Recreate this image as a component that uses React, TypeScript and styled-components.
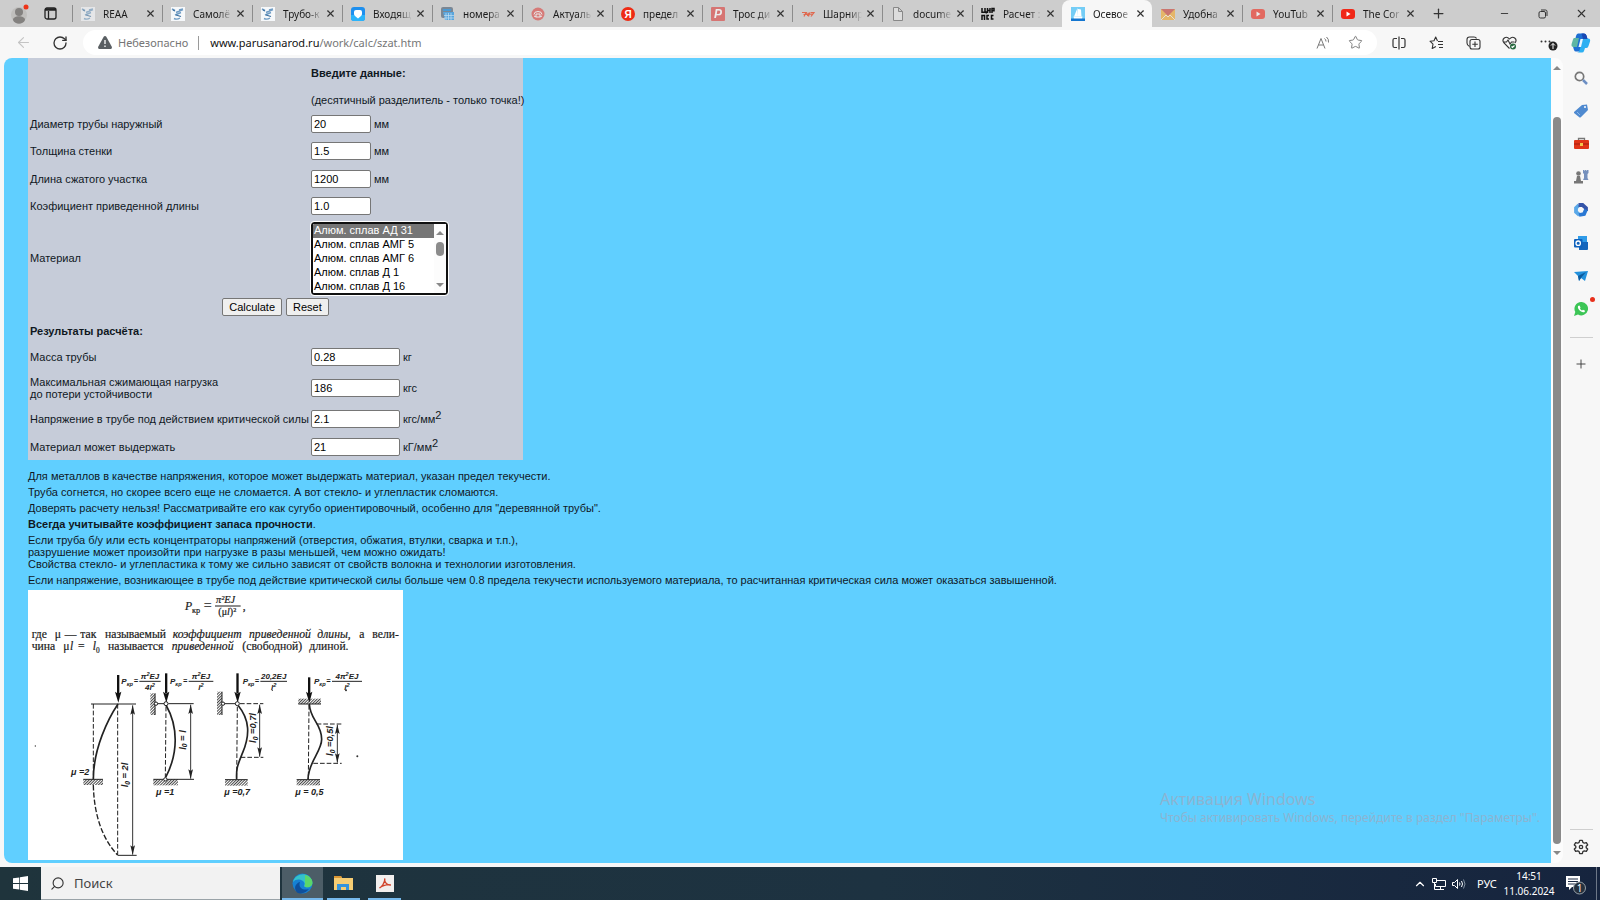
import React from 'react';
import styled, { createGlobalStyle, css } from 'styled-components';
import { RotateCw, ArrowLeft, Star, X, Plus, Minus, Search, ChevronUp } from 'lucide-react';

const GlobalStyle = createGlobalStyle`
  * { box-sizing: border-box; }
  body { margin: 0; background: #f7f7f7; }
  button, input, select { font: inherit; color: inherit; }
  p { margin: 0; }
`;

const uiFont = css`font-family: "Noto Sans", "Open Sans", sans-serif;`;

const Desktop = styled.div`
  display: flex;
  flex-direction: column;
  min-height: 100vh;
  ${uiFont}
  font-size: 11px;
  color: #1b1b1b;
`;

/* ---------- tab strip ---------- */
const TabStrip = styled.header`
  display: flex;
  height: 27px;
  background: #cdcdcd;
`;
const StripStart = styled.div`
  display: flex;
  align-items: center;
  gap: 13px;
  width: 72px;
  padding-left: 11px;
  flex: none;
`;
const TabList = styled.nav`
  display: flex;
  min-width: 0;
`;
const TabItem = styled.div<{ $active?: boolean; $bar?: boolean }>`
  display: flex;
  align-items: center;
  width: 90px;
  min-width: 0;
  padding-left: 9px;
  position: relative;
  border-radius: 8px 8px 0 0;
  background: ${p => (p.$active ? '#f7f7f7' : 'transparent')};
  &::before {
    content: '';
    position: absolute;
    left: 0;
    top: 5px;
    width: 1px;
    height: 17px;
    background: ${p => (p.$bar ? '#8c8c8c' : 'transparent')};
  }
`;
const Favicon = styled.span<{ $dim?: boolean }>`
  display: flex;
  flex: none;
  width: 14px;
  height: 14px;
  margin-right: 8px;
  opacity: ${p => (p.$dim ? 0.6 : 1)};
`;
const TabTitle = styled.a`
  flex: none;
  width: 39px;
  overflow: hidden;
  white-space: nowrap;
  color: #1b1b1b;
  text-decoration: none;
  font-size: 10px;
  line-height: 14px;
  mask-image: linear-gradient(90deg, #000 65%, transparent 100%);
`;
const IconButton = styled.button<{ $w?: number; $dim?: boolean }>`
  display: flex;
  align-items: center;
  justify-content: center;
  flex: none;
  width: ${p => p.$w ?? 16}px;
  height: 100%;
  padding: 0;
  border: 0;
  background: none;
  color: ${p => (p.$dim ? '#c4c4c4' : '#333')};
`;
const WindowControls = styled.div`
  display: flex;
  margin-left: auto;
`;

/* ---------- toolbar ---------- */
const Toolbar = styled.div`
  display: flex;
  align-items: center;
  height: 31px;
  background: #f7f7f7;
  padding: 0 8px 0 4px;
`;
const AddressBar = styled.div`
  display: flex;
  align-items: center;
  flex: 1;
  height: 25px;
  margin: 0 3px 0 5px;
  padding: 0 5px 0 15px;
  border-radius: 13px;
  background: #fff;
  font-size: 11px;
`;
const Security = styled.button`
  display: flex;
  align-items: center;
  gap: 6px;
  padding: 0 10px 0 0;
  border: 0;
  border-right: 1px solid #9a9a9a;
  background: none;
  color: #767676;
  line-height: 14px;
`;
const Url = styled.a`
  flex: 1;
  margin-left: 11px;
  color: #767676;
  text-decoration: none;
  b { font-weight: 400; color: #111; }
`;

/* ---------- middle ---------- */
const Middle = styled.div`
  display: flex;
  flex: 1;
  padding: 0 0 4px 4px;
  background: #f7f7f7;
`;
const Page = styled.main`
  position: relative;
  flex: 1;
  padding: 0 0 3px 24px;
  border-radius: 8px 0 0 8px;
  background: #60cfff;
  overflow: hidden;
  font-family: "Liberation Sans", Arial, sans-serif;
  font-size: 11px;
  line-height: 12px;
  color: #10181f;
`;
const Calc = styled.table`
  border-collapse: collapse;
  table-layout: fixed;
  background: #c6ccd9;
  width: 495px;
`;
const Row = styled.tr<{ $h: number }>`
  height: ${p => p.$h}px;
`;
const LabelCell = styled.td`
  width: 281px;
  padding: 0 0 0 2px;
  white-space: nowrap;
`;
const ValueCell = styled.td`
  padding: 0 0 0 2px;
  white-space: nowrap;
`;
const Intro = styled.td`
  padding: 0 0 4px 2px;
  vertical-align: bottom;
  white-space: nowrap;
  p + p { margin-top: 15px; }
`;
const ActionsCell = styled.td`
  padding: 0;
  text-align: center;
  font-size: 0;
`;
const Field = styled.div`
  display: flex;
  align-items: center;
  gap: 3px;
`;
const NumberInput = styled.input<{ $wide?: boolean }>`
  width: ${p => (p.$wide ? 89 : 60)}px;
  height: 18px;
  padding: 0 2px;
  border: 1px solid #767676;
  border-radius: 2px;
  background: #fff;
  color: #000;
`;
const Unit = styled.span`
  sup { font-size: 11px; line-height: 0; vertical-align: 4px; }
`;
const SelectBox = styled.div`
  position: relative;
  width: 137px;
`;
const MaterialSelect = styled.select`
  display: block;
  width: 100%;
  height: 73px;
  padding: 0;
  border: 2px solid #101010;
  border-radius: 3px;
  outline: 1px solid #fff;
  background: #fff;
  color: #000;
  option { height: 14px; min-height: 14px; padding: 0 1px; line-height: 14px; }
  option:checked {
    background: linear-gradient(#767676, #767676);
    -webkit-text-fill-color: #fff;
  }
`;
const SelectScroll = styled.div`
  position: absolute;
  inset: 2px 2px 2px auto;
  display: flex;
  flex-direction: column;
  align-items: center;
  width: 12px;
  padding: 7px 0 6px;
  background: #fcfcfc;
  pointer-events: none;
  i { width: 8px; height: 14px; margin: 7px 0 auto; border-radius: 4px; background: #8b8b8b; }
`;
const FormButton = styled.button`
  height: 18px;
  padding: 0 6px;
  margin: 0 2px;
  border: 1px solid #767676;
  border-radius: 2px;
  background: #efefef;
  color: #000;
  font-size: 11px;
  line-height: 14px;
`;
const Notes = styled.section`
  display: flex;
  flex-direction: column;
  gap: 4px;
  padding: 10px 0 4px;
`;
const Figure = styled.svg`
  display: block;
  background: #fff;
`;
const Watermark = styled.div`
  position: absolute;
  right: 11px;
  bottom: 37px;
  ${uiFont}
  color: #8bb4d2;
  font-size: 12px;
  line-height: 17px;
  p:first-child { font-size: 16px; line-height: 20px; }
`;

const ScrollTrack = styled.div`
  display: flex;
  flex-direction: column;
  align-items: center;
  flex: none;
  width: 12px;
  padding: 8px 0 8px;
  background: #fcfcfc;
  border-radius: 0 8px 8px 0;
`;
const ScrollThumb = styled.div`
  flex: 1;
  width: 8px;
  margin: 47px 0 7px;
  border-radius: 4px;
  background: #8a8a8a;
`;

const Sidebar = styled.aside`
  display: flex;
  flex-direction: column;
  align-items: center;
  flex: none;
  width: 37px;
  padding: 3px 1px 0 0;
`;
const SideButton = styled.button`
  position: relative;
  display: flex;
  align-items: center;
  justify-content: center;
  width: 30px;
  height: 33px;
  padding: 0;
  border: 0;
  background: none;
  color: #333;
`;
const SideRule = styled.hr<{ $bottom?: boolean }>`
  width: 23px;
  height: 1px;
  margin: ${p => (p.$bottom ? 'auto 0 0' : '12px 0 9px')};
  border: 0;
  background: #cfcfcf;
`;
const AlertDot = styled.i`
  position: absolute;
  right: 1px;
  top: 5px;
  width: 5px;
  height: 5px;
  border-radius: 50%;
  background: #e8301c;
`;

/* ---------- taskbar ---------- */
const Taskbar = styled.footer`
  display: flex;
  height: 33px;
  background: linear-gradient(90deg, #1f343c 0%, #1d3241 55%, #16243e 100%);
  color: #fff;
`;
const TaskButton = styled.button<{ $on?: boolean; $line?: boolean }>`
  position: relative;
  display: flex;
  align-items: center;
  justify-content: center;
  width: 41px;
  padding: 0 0 1px;
  border: 0;
  background: ${p => (p.$on ? '#4c5d67' : 'none')};
  &::after {
    content: '';
    position: absolute;
    left: ${p => (p.$on ? 0 : 4)}px;
    right: ${p => (p.$on ? 0 : 4)}px;
    bottom: 0;
    height: 2px;
    background: ${p => (p.$line ? '#76b9ed' : 'transparent')};
  }
`;
const TaskSearch = styled.label`
  display: flex;
  align-items: center;
  gap: 9px;
  width: 239px;
  margin-right: 2px;
  padding-left: 9px;
  border-bottom: 1px solid #9aa3a8;
  background: #f2f2f2;
  color: #333;
  svg { transform: scaleX(-1); }
  input {
    width: 180px;
    padding: 0;
    border: 0;
    background: none;
    font-size: 13px;
  }
  input::placeholder { color: #444; opacity: 1; }
`;
const Tray = styled.div`
  display: flex;
  align-items: center;
  margin-left: auto;
  padding-right: 3px;
`;
const Language = styled.button`
  width: 30px;
  padding: 0;
  border: 0;
  background: none;
`;
const Clock = styled.time`
  width: 54px;
  text-align: center;
  font-size: 10px;
  line-height: 15px;
`;
const ShowDesktop = styled.div`
  align-self: stretch;
  width: 1px;
  background: #6d7787;
`;

/* ---------- favicons ---------- */
const Bird = () => (
  <svg width="14" height="14" viewBox="0 0 14 14">
    <rect width="14" height="14" fill="#f6f8fa" />
    <path d="M1 2l3 1.500M5 5.500L12 2.500M12 2l-4 1M4 8l6-2.500M3 11.500q3 1.500 6-.5" stroke="#6f9cc4" strokeWidth="1.400" fill="none" />
    <path d="M5 8l5 1.500M2 3l2 1" stroke="#3a6f9f" strokeWidth="1.200" />
  </svg>
);
const Mail = () => (
  <svg width="14" height="14" viewBox="0 0 14 14">
    <rect width="14" height="14" rx="3" fill="#1e8fee" />
    <path d="M0 8h14v3q0 3-3 3H3q-3 0-3-3z" fill="#2bb4fa" />
    <path d="M3 5q0-2 2-2h4q2 0 2 2v2q0 1-1 2l-3 2.500L4 9Q3 8 3 7z" fill="#fff" />
  </svg>
);
const Calculator = () => (
  <svg width="14" height="14" viewBox="0 0 14 14">
    <rect width="12" height="11" rx="2" fill="#7b8794" />
    <path d="M2 3h8" stroke="#4a9ad4" strokeWidth="2" />
    <path d="M2 5h11v8H4z" fill="#5aa5dc" />
    <path d="M5 6v7M7.500 6v7M10 6v7M3 8.500h10M3 11h10" stroke="#c4dff2" strokeWidth=".7" />
  </svg>
);
const Round = () => (
  <svg width="14" height="14" viewBox="0 0 14 14">
    <circle cx="7" cy="7" r="6.500" fill="#dc4440" />
    <path d="M3 7.500a4 3 0 0 1 8 0M5 7h4v3H5zM3 9l2 1M11 9l-2 1" stroke="#fff" fill="none" />
  </svg>
);
const Letter = ({ ch, fill, round, italic }: { ch: string; fill: string; round?: boolean; italic?: boolean }) => (
  <svg width="14" height="14" viewBox="0 0 14 14">
    <rect width="14" height="14" rx={round ? 7 : 1} fill={fill} />
    <text x="7" y="11" textAnchor="middle" fontSize={round ? 10 : 12} fontWeight="700" fontStyle={italic ? 'italic' : 'normal'} fontFamily="Liberation Sans" fill="#fff">{ch}</text>
  </svg>
);
const Wings = () => (
  <svg width="14" height="14" viewBox="0 0 14 14">
    <path d="M1 5.500h4l-2 4M5.500 5.500l1 2.500 2-2.500-1 4M9.500 5.500H13l-3 4M2.500 7.500l9-.5" stroke="#e0694f" strokeWidth="1.200" fill="none" />
  </svg>
);
const Doc = () => (
  <svg width="14" height="14" viewBox="0 0 14 14">
    <path d="M2.500.500h5l4 4v9h-9zM7.500.500v4h4" stroke="#888" fill="#dcdcdc" />
  </svg>
);
const Cnt = () => (
  <svg width="14" height="14" viewBox="0 0 14 14" fill="none" stroke="#111" strokeWidth="1.500">
    <path d="M1 1v4.300h3V1M4 5h1.300v1.500M6.500 1v5M9 1v5M6.500 3.500H9M11 6V1.500h2v2.300h-2" />
    <path d="M1 13V8.500h2.500V13M8 8.500H6V12h2M12.500 8.500h-2V12h2" />
  </svg>
);
const Sail = () => (
  <svg width="14" height="14" viewBox="0 0 14 14">
    <rect width="14" height="14" fill="#74cdf6" />
    <path d="M6.500 1L3 9.500h4zM7 2l3 .5.500 7H7z" fill="#fff" />
    <path d="M2.500 9.500h9L11 12H3z" fill="#fff" />
    <path d="M0 11.500h14V14H0z" fill="#1476d0" />
  </svg>
);
const Envelope = () => (
  <svg width="14" height="14" viewBox="0 0 14 14">
    <rect y="2" width="14" height="11" fill="#f5a828" />
    <path d="M0 2h14L7 9z" fill="#c93c34" />
    <path d="M0 13l5-5 2 2 2-2 5 5" stroke="#fff" fill="none" strokeWidth=".8" />
  </svg>
);
const Tube = () => (
  <svg width="14" height="14" viewBox="0 0 14 14">
    <rect y="2" width="14" height="10" rx="3" fill="#f02818" />
    <path d="M5.500 4.500v5l4-2.500z" fill="#fff" />
  </svg>
);

const tabs: { title: string; icon: React.ReactNode; dim?: boolean; active?: boolean }[] = [
  { title: 'REAA', icon: <Bird />, dim: true },
  { title: 'Самолё', icon: <Bird /> },
  { title: 'Трубо-к', icon: <Bird /> },
  { title: 'Входящ', icon: <Mail /> },
  { title: 'номера', icon: <Calculator /> },
  { title: 'Актуаль', icon: <Round />, dim: true },
  { title: 'предел', icon: <Letter ch="Я" fill="#ee2b14" round /> },
  { title: 'Трос ди', icon: <Letter ch="P" fill="#dc3c38" italic />, dim: true },
  { title: 'Шарнир', icon: <Wings /> },
  { title: 'docume', icon: <Doc /> },
  { title: 'Расчет :', icon: <Cnt /> },
  { title: 'Осевое', icon: <Sail />, active: true },
  { title: 'Удобна', icon: <Envelope />, dim: true },
  { title: 'YouTub', icon: <Tube />, dim: true },
  { title: 'The Cor', icon: <Tube /> },
];

const Profile = () => (
  <svg width="20" height="22" viewBox="0 0 20 22">
    <circle cx="8" cy="12" r="8" fill="#c0bfbd" />
    <circle cx="8" cy="9" r="4" fill="#83817f" />
    <path d="M2 17c0-5 12-5 12 0-2 5-10 5-12 0z" fill="#83817f" />
    <circle cx="15" cy="4" r="2.500" fill="#ee3418" />
  </svg>
);
const Workspaces = () => (
  <svg width="13" height="13" viewBox="0 0 13 13" fill="none" stroke="#222" strokeWidth="1.300">
    <rect x="1" y="1" width="11" height="11" rx="2" /><path d="M1 2.500h11" strokeWidth="2.500" /><path d="M4.500 4v8" />
  </svg>
);
const Restore = () => (
  <svg width="10" height="10" viewBox="0 0 10 10" fill="none" stroke="#333">
    <rect x="1" y="2.500" width="6.500" height="6.500" rx="1.500" /><path d="M3 1h4.500Q9 1 9 2.500V7" />
  </svg>
);
const Warning = () => (
  <svg width="14" height="13" viewBox="0 0 14 13">
    <path d="M7 0c.6 0 1 .3 1.300.8l5.500 10c.4 1-.1 2.200-1.300 2.200h-11C.3 13-.2 11.800.2 10.800l5.500-10C6 .3 6.400 0 7 0z" fill="#5a5f63" />
    <path d="M7 4v4M7 9.500v1.500" stroke="#fff" strokeWidth="1.300" />
  </svg>
);
const ReadAloud = () => (
  <svg width="14" height="14" viewBox="0 0 14 14" fill="none" stroke="#777">
    <path d="M1 12.500L5 2.500l4 10M2.500 9h5M8.500 2.500q1.500 1 1.500 3M10.500 1q2.500 2 2 5.500" />
  </svg>
);
const Split = () => (
  <svg width="14" height="14" viewBox="0 0 14 14" fill="none" stroke="#333" strokeWidth="1.200">
    <path d="M5 2.500H2.500q-1.500 0-1.500 1.500v6q0 1.500 1.500 1.500H5M9 2.500h2.500q1.500 0 1.500 1.500v6q0 1.500-1.500 1.500H9M7 .5v13" />
  </svg>
);
const Favorites = () => (
  <svg width="15" height="14" viewBox="0 0 15 14" fill="none" stroke="#333" strokeWidth="1.100" strokeLinejoin="round">
    <path d="M8.500 5L6.700 1 5 4.700 1 5.200l3 3-.8 4.300 3.700-2.100M9 5.500h5M9 8.500h5M10 11.500h4" />
  </svg>
);
const Collections = () => (
  <svg width="15" height="14" viewBox="0 0 15 14" fill="none" stroke="#333" strokeWidth="1.100">
    <path d="M3.500 10.500Q1 9.500 1 7V3.500Q1 1 3.500 1H8q2 0 2.500 1.500" />
    <rect x="4" y="3.500" width="10" height="9.500" rx="2" /><path d="M9 5.500v5.500M6.300 8.300h5.500" />
  </svg>
);
const Heart = () => (
  <svg width="15" height="14" viewBox="0 0 15 14" fill="none" stroke="#333" strokeWidth="1.100">
    <path d="M7.500 12.500L2 7C-1 3 4-1 7.500 3 11-1 16 3 13 7M1.500 6h3l1.500-2 2 4 1.500-2h3" />
    <circle cx="11" cy="10.500" r="3" fill="#27693f" stroke="none" /><path d="M9.500 10.500l1 1 2-2" stroke="#fff" />
  </svg>
);
const More = () => (
  <svg width="20" height="16" viewBox="0 0 20 16">
    <g fill="#333"><circle cx="2.500" cy="6.500" r="1" /><circle cx="6.500" cy="6.500" r="1" /><circle cx="10.500" cy="6.500" r="1" /></g>
    <circle cx="14" cy="11" r="4.500" fill="#222" /><path d="M14 14V8.500M12 10.500l2-2 2 2" stroke="#fff" fill="none" />
  </svg>
);
const Copilot = () => (
  <svg width="20" height="20" viewBox="0 0 20 20">
    <path d="M7 .5h6q2 0 2.700 2.500L16.500 6 13 14l-3 4.500H5Q3.500 18.500 3 17l-.8-2.500L5 3Q5.600.5 7 .5z" fill="#1d6fd3" />
    <path d="M3 5h5L6 14H2.500Q0 14 .6 11L2 6.500Q2.400 5 3 5z" fill="#5db5a4" />
    <path d="M12 5.500h5q2.800 0 2 3L17.500 13Q17 15 15.500 15H14l-1 3q-.5 1.500-2 1.500H6q2 0 2.500-2z" fill="#2db0f2" />
    <path d="M13 .5q2 0 2.500 2l1 3.500H12L10.500.5z" fill="#1848b4" />
    <path d="M9.500 6H12L10 14H7.500z" fill="#eaf8ff" />
  </svg>
);

/* ---------- sidebar drawings ---------- */
const sideIcons: React.ReactNode[] = [
  <svg key="s" width="14" height="14" viewBox="0 0 14 14" fill="none"><circle cx="5.500" cy="5.500" r="4.200" stroke="#777" strokeWidth="1.700" /><path d="M9 9l4 4" stroke="#6c8fc4" strokeWidth="2.500" /></svg>,
  <svg key="t" width="14" height="14" viewBox="0 0 14 14"><path d="M0 8L8 1l5-.5L14 6l-7 7q-1 1-2 0L0 9z" fill="#4f8ad0" /><circle cx="11" cy="3" r="1" fill="#fff" /><path d="M3 8l3 3" stroke="#88b6ea" /></svg>,
  <svg key="b" width="15" height="13" viewBox="0 0 15 13"><path d="M4.500 4V1.500h6V4" stroke="#777" fill="none" strokeWidth="1.300" /><rect y="3" width="15" height="9" rx="1" fill="#e03418" /><path d="M0 7h15" stroke="#a01c10" /><path d="M6 6h3v3H6z" fill="#f4c64c" /></svg>,
  <svg key="c" width="15" height="15" viewBox="0 0 15 15"><path d="M9 1h1.500v1H11V1h1.500v1H13V1h1.500v3l-1 1v4l1 2H9l1-2V5L9 4z" fill="#7590bd" /><circle cx="4.500" cy="4.500" r="2.300" fill="#777" /><path d="M3 7h3l1 5h2v2.500H0V12h2z" fill="#777" /></svg>,
  <svg key="o" width="14" height="14" viewBox="0 0 14 14" fill="none" strokeWidth="3.800"><path d="M5.500 12L2 9V5l3-3" stroke="#5aa8e8" /><path d="M4.500 2h4l3.500 3v3" stroke="#3554a8" /><path d="M12 6.500L10 11l-5 1" stroke="#2a78d4" /></svg>,
  <svg key="m" width="14" height="14" viewBox="0 0 14 14"><rect x="4" width="9" height="10" fill="#2f9be8" /><path d="M5 6h9v7q0 1-1 1H5z" fill="#1566bc" /><rect y="3" width="8.500" height="8.500" rx="1" fill="#0f62bd" /><circle cx="4.200" cy="7.200" r="2.200" fill="none" stroke="#fff" strokeWidth="1.300" /></svg>,
  <svg key="g" width="14" height="12" viewBox="0 0 14 12"><path d="M0 2l14-1-3 10-4-3-2 3-1-5z" fill="#2391dc" /><path d="M4 6l8-4-5 6-2 3z" fill="#0d5b9e" /></svg>,
  <svg key="w" width="14" height="14" viewBox="0 0 14 14"><path d="M7 0a6.700 6.700 0 1 1-3 12.500L0 14l1.300-4A6.700 6.700 0 0 1 7 0z" fill="#3cc556" /><path d="M4 4l1.500-.5L6.500 5.500 6 6.500q.7 1.300 2 2l1-.8 2 1-.4 1.300q-1.500 1-4-.7Q3.300 6.800 4 4z" fill="#fff" /></svg>,
];

const Gear = () => (
  <svg width="16" height="16" viewBox="0 0 24 24" fill="none" stroke="#333" strokeWidth="2" strokeLinejoin="round">
    <path d="M10 2h4l.8 3 2.200 1.300 3-.9 2 3.500-2.200 2.100v2l2.200 2.100-2 3.500-3-.9-2.200 1.300-.8 3h-4l-.8-3L7 17.700l-3 .9-2-3.500L4.200 13v-2L2 8.900l2-3.500 3 .9L9.200 5z" /><circle cx="12" cy="12" r="2.500" />
  </svg>
);

/* ---------- buckling schemes ---------- */
const Hatch = ({ x, y, w, h }: { x: number; y: number; w: number; h: number }) => (
  <rect x={x} y={y} width={w} height={h} fill="url(#hatch)" />
);
const Load = ({ x, top = -45 }: { x: number; top?: number }) => (
  <g fill="#111"><path d={`M${x - 3} ${top}h7v60h-7z`} /><path d={`M${x - 9} 5l9 6 10-6-9 33z`} /></g>
);
const Dimension = ({ x, y1, y2 }: { x: number; y1: number; y2: number }) => (
  <g fill="#222"><path d={`M${x} ${y1}V${y2}`} stroke="#333" strokeWidth="3" />
    <path d={`M${x} ${y1}l7 28-7-5-7 5zM${x} ${y2}l7-28-7 5-7-5z`} /></g>
);
const Squared = ({ pre, post }: { pre: string; post?: string }) => (
  <>{pre}<tspan fontSize="17" dy="-9">2</tspan>{post && <tspan dy="9">{post}</tspan>}</>
);
const Formula = ({ x, x2, w, top, bottom }: { x: number; x2: number; w: number; top: React.ReactNode; bottom: string }) => (
  <g fontSize="24">
    <text x={x} y="-18">P<tspan fontSize="17" dy="7">кр</tspan></text>
    <text x={x2 - 17} y="-20" fontSize="22">=</text>
    <text x={x2 + w / 2} y="-33" textAnchor="middle">{top}</text>
    <path d={`M${x2} -26h${w}`} stroke="#222" strokeWidth="3" />
    <text x={x2 + w / 2} y="0" textAnchor="middle"><Squared pre={bottom} /></text>
  </g>
);
const Length = ({ x, y, children }: { x: number; y: number; children: string }) => (
  <text transform={`translate(${x} ${y}) rotate(-90)`} textAnchor="middle" fontSize="28">l<tspan fontSize="20" dy="5">0</tspan><tspan dy="-5">{children}</tspan></text>
);
const line1: [number, string, boolean?][] = [
  [35, 'где'], [104, 'μ'], [134, '—'], [181, 'так'], [255, 'называемый'], [458, 'коэффициент', true],
  [687, 'приведенной', true], [892, 'длины,', true], [1018, 'а'], [1057, 'вели-'],
];
const line2: [number, string, boolean?][] = [
  [35, 'чина'], [130, 'μ'], [150, 'l', true], [174, '='], [264, 'называется'], [455, 'приведенной', true], [667, '(свободной)'], [868, 'длиной.'],
];

const Scheme = () => (
  <Figure width="375" height="270" viewBox="24 -300 1125 810" role="img" aria-label="Схемы закрепления">
    <defs>
      <pattern id="hatch" width="6" height="6" patternUnits="userSpaceOnUse" patternTransform="rotate(45)">
        <path d="M1.500 0v6" stroke="#222" strokeWidth="2.500" />
      </pattern>
    </defs>
    <g fontFamily="Liberation Serif, serif" fontSize="35" fill="#1a1a1a" stroke="#1a1a1a" strokeWidth=".6">
      <text x="495" y="-240" fontStyle="italic">P</text>
      <text x="516" y="-232" fontSize="25">кр</text>
      <text x="551" y="-241" fontSize="42">=</text>
      <text x="588" y="-261" fontSize="31" fontStyle="italic">π²EJ</text>
      <path d="M585 -252h77" strokeWidth="3" />
      <text x="595" y="-224" fontSize="30">(μ<tspan fontStyle="italic">l</tspan>)²</text>
      <text x="668" y="-240">,</text>
      {line1.map(([x, t, i]) => <text key={x} x={x} y="-156" fontStyle={i ? 'italic' : 'normal'}>{t}</text>)}
      {line2.map(([x, t, i]) => <text key={x} x={x} y="-119" fontStyle={i ? 'italic' : 'normal'}>{t}</text>)}
      <text x="218" y="-119" fontStyle="italic">l<tspan fontSize="22" dy="7" fontStyle="normal">0</tspan></text>
    </g>
    <g fontFamily="Liberation Sans, sans-serif" fontStyle="italic" fontWeight="700" fontSize="27" fill="#222">
      <Formula x={304} x2={358} w={64} top={<Squared pre="π" post="EJ" />} bottom="4l" />
      <Formula x={450} x2={506} w={74} top={<Squared pre="π" post="EJ" />} bottom="l" />
      <Formula x={668} x2={721} w={80} top="20,2EJ" bottom="l" />
      <Formula x={882} x2={936} w={90} top={<Squared pre="4π" post="EJ" />} bottom="l" />
      <text x="153" y="254">μ =2</text>
      <text x="408" y="315">μ =1</text>
      <text x="613" y="315">μ =0,7</text>
      <text x="826" y="315">μ = 0,5</text>
      <Length x={325} y={255}> = 2l</Length>
      <Length x={497} y={150}> = l</Length>
      <Length x={708} y={114}> =0,7l</Length>
      <Length x={939} y={153}> =0,5l</Length>
    </g>
    <g fill="none" stroke="#222" strokeWidth="3">
      <path d="M213 42H348M293 496h57M190 268h59M445 41h76M400 268h122M407 41h31M405 10v65M608 41h44M606 5v70M615 269h68M835 42h68M830 269h70" />
      <path d="M220 42V265M293 42V495M438 50L436 262M652 50l-2 218M867 45l-2 223M660 41h70M662 202h68M890 102h75M880 220h85" strokeDasharray="14 6" />
      <path d="M220 285C222 380 250 450 293 495" strokeWidth="4" strokeDasharray="16 6" />
      <path d="M294 42C265 85 220 175 220 268M438 45C475 110 475 190 437 262M654 46C690 90 690 135 668 188 653 225 648 235 650 268M868 42C870 90 905 100 905 148 905 185 865 215 864 268" strokeWidth="5" />
    </g>
    <Load x={294} /><Load x={438} top={-50} /><Load x={652} top={-50} /><Load x={867} top={-38} />
    <Dimension x={338} y1={46} y2={494} /><Dimension x={512} y1={44} y2={266} />
    <Dimension x={719} y1={44} y2={200} /><Dimension x={952} y1={104} y2={218} />
    <Hatch x={190} y={268} w={59} h={17} /><Hatch x={400} y={268} w={74} h={18} /><Hatch x={615} y={269} w={68} h={18} />
    <Hatch x={830} y={269} w={70} h={17} /><Hatch x={835} y={26} w={68} h={16} />
    <Hatch x={391} y={10} w={15} h={65} /><Hatch x={591} y={5} w={15} h={70} />
    <g fill="#fff" stroke="#222" strokeWidth="3">
      <circle cx="438" cy="41" r="6" /><circle cx="408" cy="41" r="5" /><circle cx="436" cy="268" r="5" />
      <circle cx="652" cy="41" r="6" /><circle cx="609" cy="41" r="5" />
    </g>
    <g fill="#333">
      <circle cx="1012" cy="199" r="3" /><circle cx="978" cy="1" r="3" /><circle cx="757" cy="1" r="2" /><circle cx="46" cy="168" r="2" />
    </g>
  </Figure>
);

const inputs = [
  { id: 'diameter', h: 27, label: 'Диаметр трубы наружный', value: '20', unit: 'мм' },
  { id: 'wall', h: 28, label: 'Толщина стенки', value: '1.5', unit: 'мм' },
  { id: 'length', h: 27, label: 'Длина сжатого участка', value: '1200', unit: 'мм' },
  { id: 'factor', h: 28, label: 'Коэфициент приведенной длины', value: '1.0', unit: '' },
];
const results = [
  { id: 'mass', h: 27, label: 'Масса трубы', value: '0.28', unit: 'кг' },
  { id: 'load', h: 35, label: <>Максимальная сжимающая нагрузка<br />до потери устойчивости</>, value: '186', unit: 'кгс' },
  { id: 'stress', h: 28, label: 'Напряжение в трубе под действием критической силы', value: '2.1', unit: <>кгс/мм<sup>2</sup></> },
  { id: 'limit', h: 27, label: 'Материал может выдержать', value: '21', unit: <>кГ/мм<sup>2</sup></> },
];
const materials = [
  'Алюм. сплав АД 31', 'Алюм. сплав АМГ 5', 'Алюм. сплав АМГ 6', 'Алюм. сплав Д 1', 'Алюм. сплав Д 16',
];

export default function App() {
  return (
    <Desktop>
      <GlobalStyle />
      <TabStrip>
        <StripStart><Profile /><Workspaces /></StripStart>
        <TabList>
          {tabs.map((t, i) => (
            <TabItem key={t.title} $active={t.active} $bar={!t.active && !tabs[i - 1]?.active}>
              <Favicon $dim={t.dim}>{t.icon}</Favicon>
              <TabTitle href="#">{t.title}</TabTitle>
              <IconButton $w={17} aria-label="Закрыть вкладку"><X size={11} strokeWidth={2.500} /></IconButton>
            </TabItem>
          ))}
        </TabList>
        <IconButton $w={32} aria-label="Новая вкладка"><Plus size={15} strokeWidth={2} /></IconButton>
        <WindowControls>
          <IconButton $w={38} aria-label="Свернуть"><Minus size={11} /></IconButton>
          <IconButton $w={39} aria-label="Восстановить"><Restore /></IconButton>
          <IconButton $w={38} aria-label="Закрыть"><X size={13} /></IconButton>
        </WindowControls>
      </TabStrip>

      <Toolbar>
        <IconButton $w={38} $dim aria-label="Назад"><ArrowLeft size={17} strokeWidth={1.500} /></IconButton>
        <IconButton $w={36} aria-label="Обновить"><RotateCw size={16} strokeWidth={2} /></IconButton>
        <AddressBar>
          <Security><Warning />Небезопасно</Security>
          <Url href="#"><b>www.parusanarod.ru</b>/work/calc/szat.htm</Url>
          <IconButton $w={33} aria-label="Прочесть вслух"><ReadAloud /></IconButton>
          <IconButton $w={33} aria-label="В избранное"><Star size={15} strokeWidth={1.500} color="#777" /></IconButton>
        </AddressBar>
        <IconButton $w={38} aria-label="Разделить экран"><Split /></IconButton>
        <IconButton $w={37} aria-label="Избранное"><Favorites /></IconButton>
        <IconButton $w={36} aria-label="Коллекции"><Collections /></IconButton>
        <IconButton $w={37} aria-label="Производительность"><Heart /></IconButton>
        <IconButton $w={42} aria-label="Ещё"><More /></IconButton>
        <IconButton $w={22} aria-label="Copilot"><Copilot /></IconButton>
      </Toolbar>

      <Middle>
        <Page>
          <form onSubmit={e => e.preventDefault()}>
            <Calc>
              <tbody>
                <Row $h={52}>
                  <LabelCell />
                  <Intro><p><b>Введите данные:</b></p><p>(десятичный разделитель - только точка!)</p></Intro>
                </Row>
                {inputs.map(r => (
                  <Row key={r.id} $h={r.h}>
                    <LabelCell><label htmlFor={r.id}>{r.label}</label></LabelCell>
                    <ValueCell><Field><NumberInput id={r.id} defaultValue={r.value} /><Unit>{r.unit}</Unit></Field></ValueCell>
                  </Row>
                ))}
                <Row $h={76}>
                  <LabelCell><label htmlFor="material">Материал</label></LabelCell>
                  <ValueCell>
                    <SelectBox>
                      <MaterialSelect id="material" size={5} defaultValue={materials[0]}>
                        {materials.map(m => <option key={m}>{m}</option>)}
                      </MaterialSelect>
                      <SelectScroll>
                        <svg width="8" height="4" viewBox="0 0 8 4"><path d="M0 4l4-4 4 4z" fill="#888" /></svg>
                        <i />
                        <svg width="8" height="4" viewBox="0 0 8 4"><path d="M0 0l4 4 4-4z" fill="#888" /></svg>
                      </SelectScroll>
                    </SelectBox>
                  </ValueCell>
                </Row>
                <Row $h={23}>
                  <ActionsCell colSpan={2}><FormButton type="submit">Calculate</FormButton><FormButton type="reset">Reset</FormButton></ActionsCell>
                </Row>
                <Row $h={24}><LabelCell colSpan={2}><b>Результаты расчёта:</b></LabelCell></Row>
                {results.map(r => (
                  <Row key={r.id} $h={r.h}>
                    <LabelCell><label htmlFor={r.id}>{r.label}</label></LabelCell>
                    <ValueCell><Field><NumberInput $wide id={r.id} defaultValue={r.value} /><Unit>{r.unit}</Unit></Field></ValueCell>
                  </Row>
                ))}
              </tbody>
            </Calc>
          </form>
          <Notes>
            <p>Для металлов в качестве напряжения, которое может выдержать материал, указан предел текучести.</p>
            <p>Труба согнется, но скорее всего еще не сломается. А вот стекло- и углепластик сломаются.</p>
            <p>Доверять расчету нельзя! Рассматривайте его как сугубо ориентировочный, особенно для "деревянной трубы".</p>
            <p><b>Всегда учитывайте коэффициент запаса прочности</b>.</p>
            <p>Если труба б/у или есть концентраторы напряжений (отверстия, обжатия, втулки, сварка и т.п.),<br />
              разрушение может произойти при нагрузке в разы меньшей, чем можно ожидать!<br />
              Свойства стекло- и углепластика к тому же сильно зависят от свойств волокна и технологии изготовления.</p>
            <p>Если напряжение, возникающее в трубе под действие критической силы больше чем 0.8 предела текучести используемого материала, то расчитанная критическая сила может оказаться завышенной.</p>
          </Notes>
          <Scheme />
          <Watermark>
            <p>Активация Windows</p>
            <p>Чтобы активировать Windows, перейдите в раздел "Параметры".</p>
          </Watermark>
        </Page>
        <ScrollTrack>
          <svg width="8" height="4" viewBox="0 0 8 4"><path d="M0 4l4-4 4 4z" fill="#888" /></svg>
          <ScrollThumb />
          <svg width="8" height="4" viewBox="0 0 8 4"><path d="M0 0l4 4 4-4z" fill="#888" /></svg>
        </ScrollTrack>
        <Sidebar>
          {sideIcons.map((icon, i) => (
            <SideButton key={i} aria-label={`Панель ${i + 1}`}>{icon}{i === 7 && <AlertDot />}</SideButton>
          ))}
          <SideRule />
          <SideButton aria-label="Настроить"><Plus size={14} strokeWidth={1.500} /></SideButton>
          <SideRule $bottom />
          <SideButton aria-label="Параметры"><Gear /></SideButton>
        </Sidebar>
      </Middle>

      <Taskbar>
        <TaskButton aria-label="Пуск">
          <svg width="15" height="15" viewBox="0 0 15 15" fill="#fff"><path d="M0 2.300l6.300-.9v5.700H0zM7 1.300L15 0v7.100H7zM0 7.900h6.300v5.700L0 12.700zM7 7.900h8V15l-8-1.200z" /></svg>
        </TaskButton>
        <TaskSearch><Search size={15} strokeWidth={1.800} /><input placeholder="Поиск" aria-label="Поиск" /></TaskSearch>
        <TaskButton $on $line aria-label="Edge">
          <svg width="21" height="21" viewBox="0 0 21 21">
            <circle cx="10.500" cy="10.500" r="10" fill="#1681d4" />
            <path d="M1 9C3 0 17-2 20 8c1 5-3 7-7 6-2-1 0-2-.5-4C11 6 4 5 1 9z" fill="#35c1c9" />
            <path d="M13 2c5 1 8 5 7.500 8.500-.8 4-5 4.500-7.500 3.300-1-1 .5-2 0-4z" fill="#5bd66a" />
            <path d="M8 9c-2 5 2 9 9 7-3 4-8 5.500-12 3.500C1 15 4 10 8 9z" fill="#0e4f9c" />
          </svg>
        </TaskButton>
        <TaskButton $line aria-label="Проводник">
          <svg width="19" height="16" viewBox="0 0 19 16"><path d="M0 1h7l1 2h11v12H0z" fill="#f6cd73" /><path d="M0 1h7l1 2H0z" fill="#d99635" /><path d="M3 15V9h12v6h-3v-3H7v3z" fill="#3594dc" /></svg>
        </TaskButton>
        <TaskButton $line aria-label="Acrobat">
          <svg width="18" height="17" viewBox="0 0 18 17"><rect width="18" height="17" fill="#f2efee" /><path d="M3.500 13c2-1 5.500-5 5.300-9.500-1 4 3 7 6 6.500-4-1-9 .8-11.300 3z" fill="none" stroke="#d1432b" strokeWidth="1.300" /></svg>
        </TaskButton>
        <Tray>
          <IconButton $w={24} aria-label="Скрытые значки"><ChevronUp size={14} color="#fff" /></IconButton>
          <svg width="14" height="12" viewBox="0 0 14 12" fill="none" stroke="#fff"><path d="M5 2.500h8.500v6H3.500V6M5 11.500h7M8.500 9v2" /><path d="M.5.500h4v4h-4zM2.500 5v6.500H5" /></svg>
          <svg width="26" height="12" viewBox="-6 0 26 12" fill="none" stroke="#fff"><path d="M.500 4.500h2l3-3v9l-3-3h-2zM7.500 4.500q1 1.500 0 3M9.500 3q2 3 0 6" /><path d="M11.500 1.500q3 4.500 0 9" stroke="#8090a0" /></svg>
          <Language>РУС</Language>
          <Clock>14:51<br />11.06.2024</Clock>
          <IconButton $w={40} aria-label="Уведомления">
            <svg width="22" height="22" viewBox="0 0 22 22"><path d="M1 3h14v11H7l-3 3v-3H1z" fill="#fff" /><path d="M3 6h10M3 8.500h10M3 11h7" stroke="#1a2842" /><circle cx="14.500" cy="15" r="6" fill="#26313d" stroke="#97a0a8" /><text x="14.500" y="19" fontSize="10" textAnchor="middle" fill="#fff" fontFamily="Noto Sans">1</text></svg>
          </IconButton>
          <ShowDesktop />
        </Tray>
      </Taskbar>
    </Desktop>
  );
}
